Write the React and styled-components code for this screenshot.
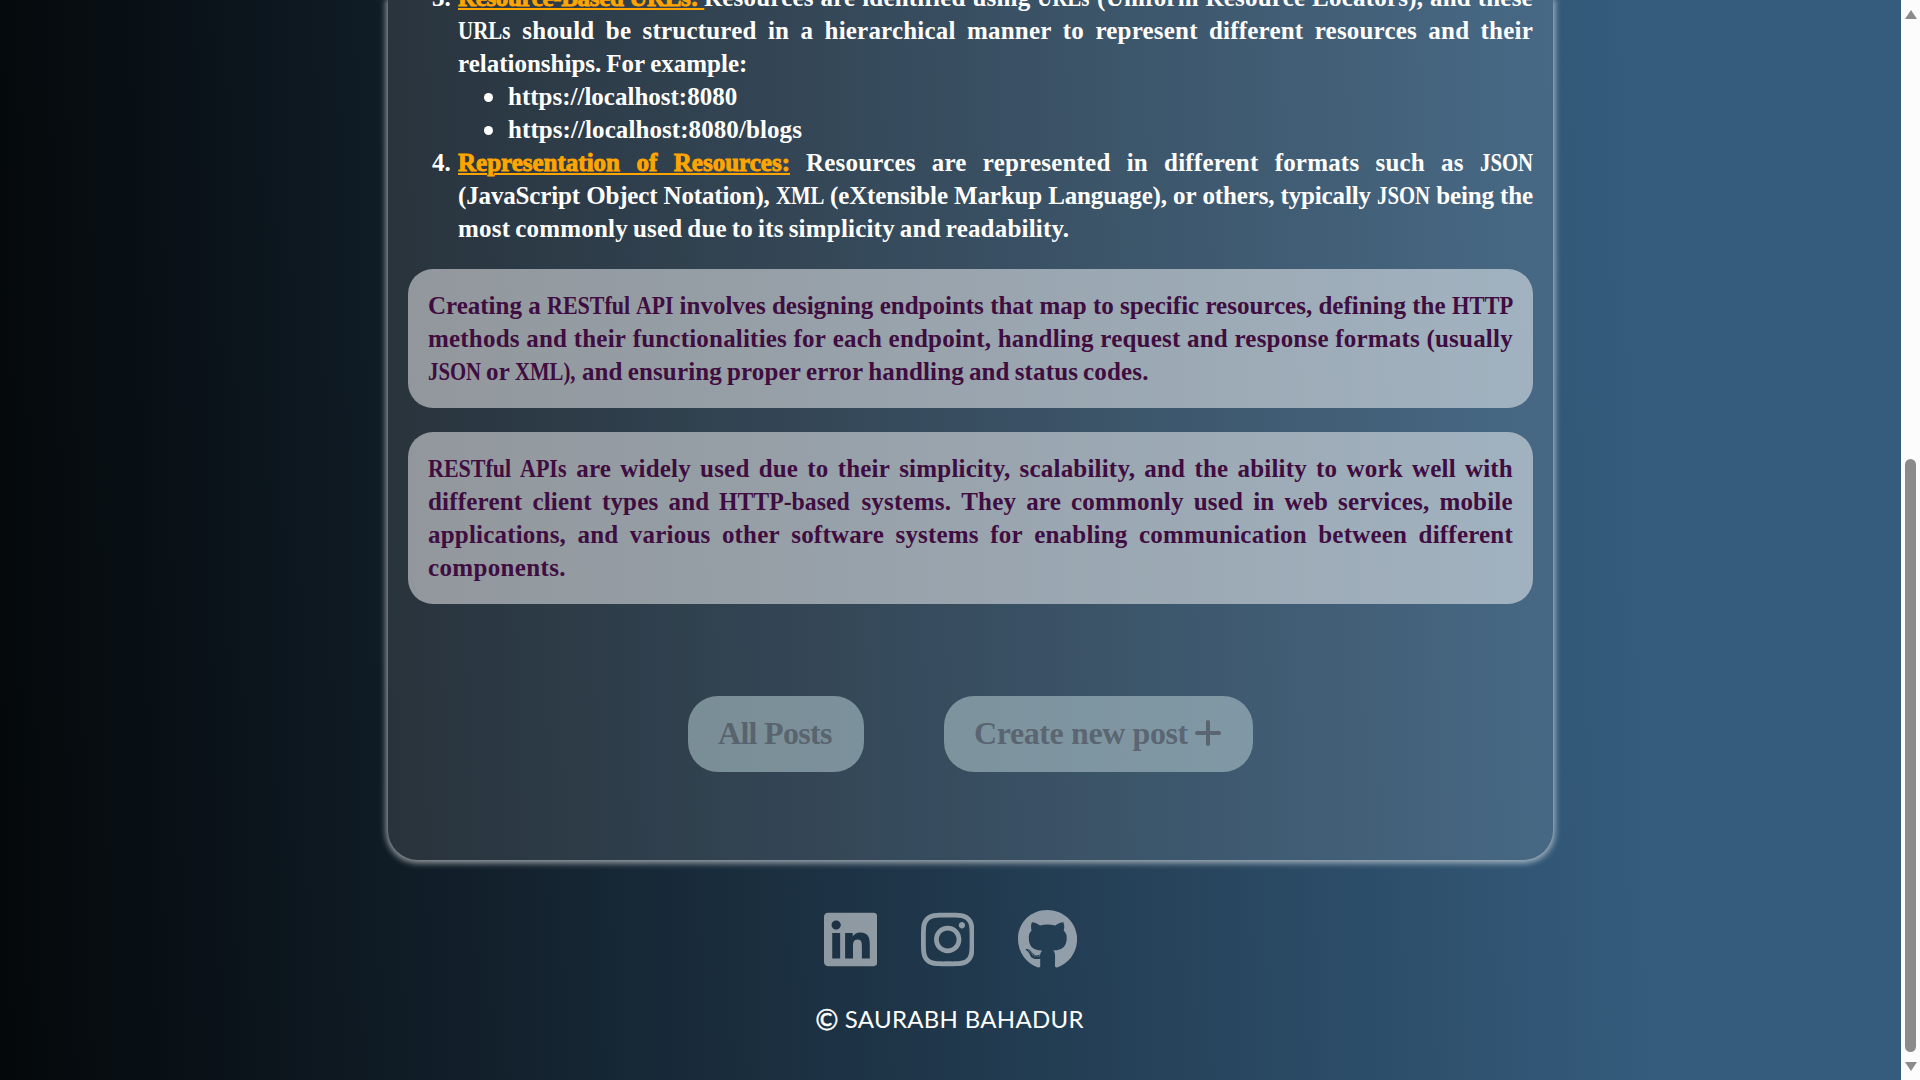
import React from "react";
import styled, { createGlobalStyle } from "styled-components";
import { FaLinkedin, FaInstagram, FaGithub } from "react-icons/fa";
import { FaPlus } from "react-icons/fa6";

const GlobalStyle = createGlobalStyle`
  * { box-sizing: border-box; }
  html, body { margin: 0; height: 1080px; overflow: hidden; }
`;

const Page = styled.div`
  display: flex;
  width: 1920px;
  height: 1080px;
  overflow: hidden;
`;

const Main = styled.main`
  width: 1901px;
  height: 1080px;
  background: linear-gradient(88.5deg, #04080a 0%, #0b141b 13%, #355c7d 86%);
  display: flex;
  flex-direction: column;
`;

const Panel = styled.section`
  width: 1165px;
  height: 860px;
  flex: none;
  margin-left: 388px;
  padding: 0 20px;
  border-radius: 0 0 30px 30px;
  background: rgba(255, 255, 255, 0.105);
  box-shadow: 0 1px 6px 2px rgba(255, 255, 255, 0.56);
  font-family: "Liberation Serif", serif;
  font-weight: 700;
  font-size: 25px;
  line-height: 33px;
`;

const List = styled.div`
  padding-left: 50px;
  margin-top: -19px;
  color: #fff;
`;

const Line = styled.div`
  display: flex;
  height: 33px;
  white-space: pre;
  justify-content: ${(p) => (p.$loose ? "flex-start" : "space-between")};
  gap: ${(p) => (p.$loose ? 5 : 0)}px;
  letter-spacing: ${(p) => (p.$ls === undefined ? 0.2 : p.$ls)}px;
`;

const Rest = styled.span`
  display: flex;
  flex: 1;
  justify-content: space-between;
  margin-left: ${(p) => p.$after || 0}px;
`;

const Capitals = styled.span`
  display: block;
  width: ${(p) => p.$w}px;
  letter-spacing: 0;
  transform: scaleX(${(p) => p.$scale});
  transform-origin: left;
`;

const Item = styled.div`
  display: grid;
  grid-template-columns: 26px 1fr;
  margin-left: -26px;
`;

const SubItem = styled(Item)`
  margin-left: 24px;
`;

const Dot = styled.span`
  width: 9px;
  height: 9px;
  margin: 13px 0 0 2px;
  border-radius: 50%;
  background: #fff;
`;

const Term = styled.span`
  display: block;
  width: ${(p) => p.$w}px;
  color: orange;
  -webkit-text-stroke: 0.9px orange;
  text-align: justify;
  text-align-last: justify;
  text-decoration: underline;
  text-decoration-thickness: 2px;
  text-underline-offset: 2px;
  letter-spacing: ${(p) => p.$ls || 0}px;
  white-space: nowrap;
`;

const Note = styled.div`
  margin-top: 24px;
  padding: 20px;
  border-radius: 25px;
  background: rgba(255, 255, 255, 0.49);
  color: #3f0d40;
`;

const Actions = styled.div`
  display: flex;
  justify-content: center;
  gap: 80px;
  margin-top: 92px;
`;

const Button = styled.button`
  display: flex;
  align-items: center;
  justify-content: space-between;
  width: ${(p) => p.$w}px;
  height: 76px;
  padding: 0 29px 2px 30px;
  border: 0;
  border-radius: 30px;
  background: rgba(176, 199, 204, 0.58);
  color: rgba(70, 74, 86, 0.65);
  font: 700 32px/44px "Liberation Serif", serif;
  letter-spacing: ${(p) => p.$ls}px;
  white-space: nowrap;
`;

const Footer = styled.footer`
  display: flex;
  flex-direction: column;
  align-items: center;
  padding-top: 49px;
`;

const Socials = styled.div`
  display: grid;
  grid-template-columns: 53.4px 53.4px 59.1px;
  column-gap: 43.6px;
  color: rgba(255, 255, 255, 0.5);
  svg { width: 100%; height: 61px; }
`;

const Copyright = styled.p`
  display: flex;
  gap: 6px;
  align-items: center;
  margin: 34px 2px 0 0;
  color: #fff;
  font: 400 24px/30px Lato, sans-serif;
  letter-spacing: 0.3px;
  white-space: nowrap;
`;

const Mark = styled.span`
  font-size: 28px;
  line-height: 30px;
  -webkit-text-stroke: 0.4px #fff;
`;

const Scrollbar = styled.aside`
  width: 19px;
  height: 1080px;
  background: #fcfcfc;
  display: flex;
  flex-direction: column;
  align-items: center;
  padding: 10px 0 7px;
`;

const Thumb = styled.div`
  width: 11px;
  height: 593px;
  margin: 440px 0 10px;
  border-radius: 6px;
  background: #8b8b8b;
`;

const Arrow = styled.div`
  width: 0;
  height: 0;
  border: 0 solid transparent;
  border-width: ${(p) => (p.$down ? "9px 6px 0" : "0 6px 9px")};
  border-top-color: ${(p) => (p.$down ? "#8b8b8b" : "transparent")};
  border-bottom-color: ${(p) => (p.$down ? "transparent" : "#8b8b8b")};
`;

/* Words in capitals are set narrower: [width, horizontal scale]. */
const capitals = {
  "JSON": [53, 0.83],
  "XML": [48, 0.83],
  "XML),": [62, 0.83],
  "HTTP": [61, 0.9],
  "HTTP-based": [132, 0.95],
  "RESTful": [83, 0.88],
  "API": [37, 0.87],
  "APIs": [47, 0.88],
  "URLs": [53, 0.84],
};

const words = (text) =>
  text.split(" ").map((w, i) =>
    capitals[w]
      ? <Capitals key={i} $w={capitals[w][0]} $scale={capitals[w][1]}>{w}</Capitals>
      : <span key={i}>{w}</span>
  );

const Text = ({ children, ...rest }) => <Line {...rest}>{words(children)}</Line>;

export default function App() {
  return (
    <Page>
      <GlobalStyle />
      <Main>
        <Panel>
          <List>
            <Item>
              <span>3.</span>
              <div>
                <Line>
                  <Term $w={246} $ls={-0.35}>{"Resource-Based URLs:\u00a0"}</Term>
                  <Rest>{words("Resources are identified using URLs (Uniform Resource Locators), and these")}</Rest>
                </Line>
                <Text>URLs should be structured in a hierarchical manner to represent different resources and their</Text>
                <Text $loose $ls={0}>relationships. For example:</Text>
              </div>
            </Item>
            <SubItem><Dot /><Text $loose $ls={0}>https://localhost:8080</Text></SubItem>
            <SubItem><Dot /><Text $loose $ls={0.08}>https://localhost:8080/blogs</Text></SubItem>
            <Item>
              <span>4.</span>
              <div>
                <Line>
                  <Term $w={332}>Representation of Resources:</Term>
                  <Rest $after={16}>{words("Resources are represented in different formats such as JSON")}</Rest>
                </Line>
                <Text $ls={-0.15}>(JavaScript Object Notation), XML (eXtensible Markup Language), or others, typically JSON being the</Text>
                <Text $loose>most commonly used due to its simplicity and readability.</Text>
              </div>
            </Item>
          </List>
          <Note>
            <Text $ls={0}>Creating a RESTful API involves designing endpoints that map to specific resources, defining the HTTP</Text>
            <Text>methods and their functionalities for each endpoint, handling request and response formats (usually</Text>
            <Text $loose $ls={0.15}>JSON or XML), and ensuring proper error handling and status codes.</Text>
          </Note>
          <Note>
            <Text>RESTful APIs are widely used due to their simplicity, scalability, and the ability to work well with</Text>
            <Text>different client types and HTTP-based systems. They are commonly used in web services, mobile</Text>
            <Text>applications, and various other software systems for enabling communication between different</Text>
            <Text $loose $ls={0.35}>components.</Text>
          </Note>
          <Actions>
            <Button $w={176} $ls={-0.7}>All Posts</Button>
            <Button $w={309} $ls={-0.4}>Create new post<FaPlus /></Button>
          </Actions>
        </Panel>
        <Footer>
          <Socials><FaLinkedin /><FaInstagram /><FaGithub /></Socials>
          <Copyright><Mark>©</Mark><span>SAURABH BAHADUR</span></Copyright>
        </Footer>
      </Main>
      <Scrollbar><Arrow /><Thumb /><Arrow $down /></Scrollbar>
    </Page>
  );
}
